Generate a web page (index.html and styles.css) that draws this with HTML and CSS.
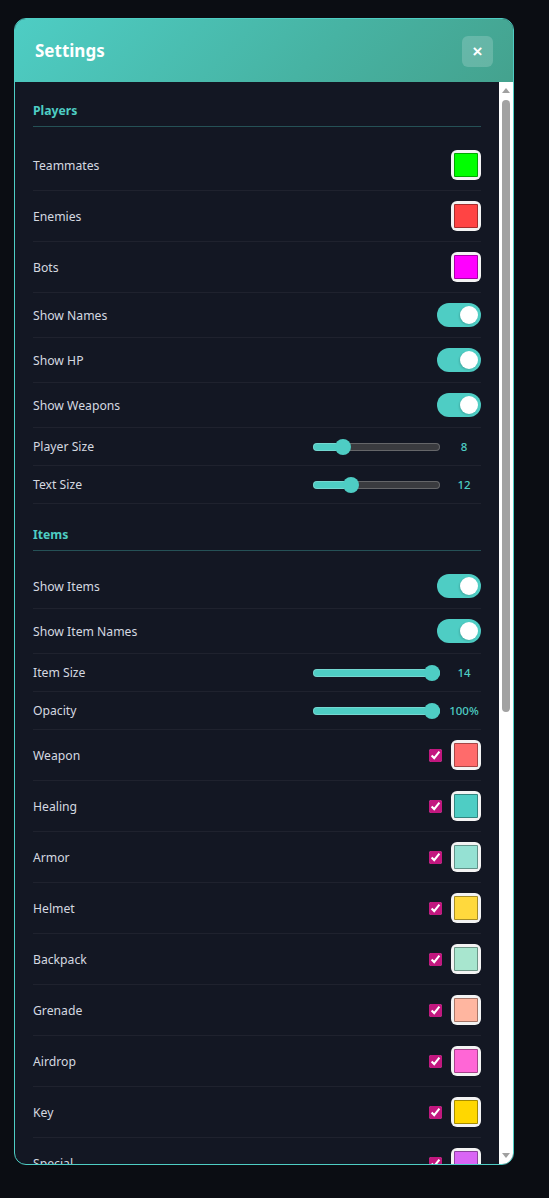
FILE: index.html
```html
<!DOCTYPE html>
<html lang="en">
<head>
<meta charset="utf-8">
<title>Settings</title>
<link rel="stylesheet" href="styles.css">
</head>
<body>
<div class="panel">
  <div class="header">
    <h2 class="title">Settings</h2>
    <button class="close" type="button">×</button>
  </div>
  <div class="body">
    <div class="content">
      <section class="section">
        <div class="section-title">Players</div>
        <div class="row row-color"><span class="label">Teammates</span><div class="controls"><span class="swatch"><span class="swatch-fill" style="--c:#00ff00"></span></span></div></div>
        <div class="row row-color"><span class="label">Enemies</span><div class="controls"><span class="swatch"><span class="swatch-fill" style="--c:#ff4444"></span></span></div></div>
        <div class="row row-color"><span class="label">Bots</span><div class="controls"><span class="swatch"><span class="swatch-fill" style="--c:#ff00ff"></span></span></div></div>
        <div class="row row-toggle"><span class="label">Show Names</span><div class="controls"><span class="toggle"><span class="knob"></span></span></div></div>
        <div class="row row-toggle"><span class="label">Show HP</span><div class="controls"><span class="toggle"><span class="knob"></span></span></div></div>
        <div class="row row-toggle"><span class="label">Show Weapons</span><div class="controls"><span class="toggle"><span class="knob"></span></span></div></div>
        <div class="row row-slider"><span class="label">Player Size</span><div class="controls"><input class="range" type="range" min="4" max="24" value="8" style="--p:19.8%"><span class="value">8</span></div></div>
        <div class="row row-slider"><span class="label">Text Size</span><div class="controls"><input class="range" type="range" min="8" max="23" value="12" style="--p:27%"><span class="value">12</span></div></div>
      </section>
      <section class="section">
        <div class="section-title">Items</div>
        <div class="row row-toggle"><span class="label">Show Items</span><div class="controls"><span class="toggle"><span class="knob"></span></span></div></div>
        <div class="row row-toggle"><span class="label">Show Item Names</span><div class="controls"><span class="toggle"><span class="knob"></span></span></div></div>
        <div class="row row-slider"><span class="label">Item Size</span><div class="controls"><input class="range" type="range" min="4" max="14" value="14" style="--p:100%"><span class="value">14</span></div></div>
        <div class="row row-slider"><span class="label">Opacity</span><div class="controls"><input class="range" type="range" min="0" max="100" value="100" style="--p:100%"><span class="value">100%</span></div></div>
        <div class="row row-color"><span class="label">Weapon</span><div class="controls"><input class="check" type="checkbox" checked><span class="swatch"><span class="swatch-fill" style="--c:#ff6b6b"></span></span></div></div>
        <div class="row row-color"><span class="label">Healing</span><div class="controls"><input class="check" type="checkbox" checked><span class="swatch"><span class="swatch-fill" style="--c:#4ecdc4"></span></span></div></div>
        <div class="row row-color"><span class="label">Armor</span><div class="controls"><input class="check" type="checkbox" checked><span class="swatch"><span class="swatch-fill" style="--c:#95e1d3"></span></span></div></div>
        <div class="row row-color"><span class="label">Helmet</span><div class="controls"><input class="check" type="checkbox" checked><span class="swatch"><span class="swatch-fill" style="--c:#ffd93d"></span></span></div></div>
        <div class="row row-color"><span class="label">Backpack</span><div class="controls"><input class="check" type="checkbox" checked><span class="swatch"><span class="swatch-fill" style="--c:#a8e6cf"></span></span></div></div>
        <div class="row row-color"><span class="label">Grenade</span><div class="controls"><input class="check" type="checkbox" checked><span class="swatch"><span class="swatch-fill" style="--c:#ffb6a0"></span></span></div></div>
        <div class="row row-color"><span class="label">Airdrop</span><div class="controls"><input class="check" type="checkbox" checked><span class="swatch"><span class="swatch-fill" style="--c:#ff66d6"></span></span></div></div>
        <div class="row row-color"><span class="label">Key</span><div class="controls"><input class="check" type="checkbox" checked><span class="swatch"><span class="swatch-fill" style="--c:#ffd700"></span></span></div></div>
        <div class="row row-color"><span class="label">Special</span><div class="controls"><input class="check" type="checkbox" checked><span class="swatch"><span class="swatch-fill" style="--c:#d966f5"></span></span></div></div>
      </section>
    </div>
    <div class="scrollbar" aria-hidden="true">
      <span class="sb-btn sb-up"></span>
      <span class="sb-track"><span class="sb-thumb"></span></span>
      <span class="sb-btn sb-down"></span>
    </div>
  </div>
</div>
</body>
</html>
```
FILE: styles.css
```css
* { box-sizing: border-box; }

html, body {
  margin: 0;
  height: 100%;
}

body {
  background: #0b0d13;
  font-family: "Noto Sans", "Open Sans", "Liberation Sans", sans-serif;
  padding: 18px 0 0 14px;
  overflow: hidden;
}

.panel {
  width: 500px;
  height: 1147px;
  border: 1px solid #4ecdc4;
  border-radius: 12px;
  background: #131723;
  display: flex;
  flex-direction: column;
  overflow: hidden;
}

.header {
  height: 63px;
  flex: 0 0 auto;
  display: flex;
  align-items: center;
  justify-content: space-between;
  padding: 0 20px;
  background: linear-gradient(135deg, #4ecdc4 0%, #47b3a3 60%, #44a28e 100%);
}

.title {
  margin: 0;
  color: #ffffff;
  font-size: 17px;
  font-weight: 700;
}

.close {
  width: 31px;
  height: 31px;
  border: none;
  border-radius: 6px;
  background: rgba(255, 255, 255, 0.18);
  color: #ffffff;
  font-family: "Liberation Sans", sans-serif;
  font-size: 17px;
  font-weight: 700;
  line-height: 31px;
  padding: 0;
  margin-top: 1px;
}

.body {
  flex: 1 1 auto;
  min-height: 0;
  display: flex;
}

.content {
  flex: 1 1 auto;
  min-width: 0;
  overflow: hidden;
  padding: 20px 18px 0 18px;
}

.scrollbar {
  flex: 0 0 14px;
  background: #ffffff;
  display: flex;
  flex-direction: column;
}

.sb-btn {
  flex: 0 0 17px;
  display: flex;
  align-items: center;
  justify-content: center;
}

.sb-btn::before {
  content: "";
  width: 0;
  height: 0;
  border-left: 4px solid transparent;
  border-right: 4px solid transparent;
}

.sb-up::before {
  border-bottom: 5px solid #a0a0a0;
}

.sb-down::before {
  border-top: 5px solid #a0a0a0;
}

.sb-track {
  flex: 1 1 auto;
  display: flex;
  flex-direction: column;
  padding: 1px 3px 0 3px;
}

.sb-thumb {
  height: 612px;
  background: #a2a2a2;
  border-radius: 4px;
}

.section + .section {
  margin-top: 22px;
}

.section-title {
  color: #4ecdc4;
  font-size: 12.2px;
  font-weight: 700;
  line-height: 17px;
  padding-bottom: 7px;
  border-bottom: 1px solid rgba(78, 205, 196, 0.32);
  margin-bottom: 13px;
}

.row {
  display: flex;
  align-items: center;
  justify-content: space-between;
  padding: 10px 0;
  border-bottom: 1px solid rgba(255, 255, 255, 0.05);
}

.label {
  color: #d5d9e0;
  font-size: 12.2px;
  line-height: 17px;
  white-space: nowrap;
}

.controls {
  display: flex;
  align-items: center;
  gap: 9px;
}

.swatch {
  display: block;
  width: 30px;
  height: 30px;
  padding: 3px;
  border-radius: 6px;
  background: #f3f3f3;
}

.swatch-fill {
  display: block;
  width: 100%;
  height: 100%;
  background: var(--c);
  border: 1px solid rgba(0, 0, 0, 0.35);
  border-radius: 1px;
}

.check {
  width: 13px;
  height: 13px;
  margin: 0;
  accent-color: #c2177f;
}

.toggle {
  display: flex;
  align-items: center;
  justify-content: flex-end;
  width: 44px;
  height: 24px;
  padding: 0 3px;
  border-radius: 12px;
  background: #4ecdc4;
}

.knob {
  width: 18px;
  height: 18px;
  border-radius: 50%;
  background: #ffffff;
  box-shadow: -1px 1px 2px rgba(0, 0, 0, 0.15);
}

.row-slider .controls {
  gap: 7px;
}

.range {
  -webkit-appearance: none;
  appearance: none;
  width: 127px;
  height: 8px;
  margin: 0;
  border-radius: 4px;
  background: linear-gradient(to right, #4ecdc4 0, #4ecdc4 var(--p), #3a3b3f var(--p), #3a3b3f 100%);
  box-shadow: inset 0 0 0 1px rgba(255, 255, 255, 0.22);
  outline: none;
}

.range::-webkit-slider-thumb {
  -webkit-appearance: none;
  appearance: none;
  width: 16px;
  height: 16px;
  border-radius: 50%;
  background: #4ecdc4;
  border: none;
}

.value {
  width: 34px;
  text-align: center;
  color: #4ecdc4;
  font-size: 11.5px;
  font-weight: 500;
  line-height: 17px;
}
```
